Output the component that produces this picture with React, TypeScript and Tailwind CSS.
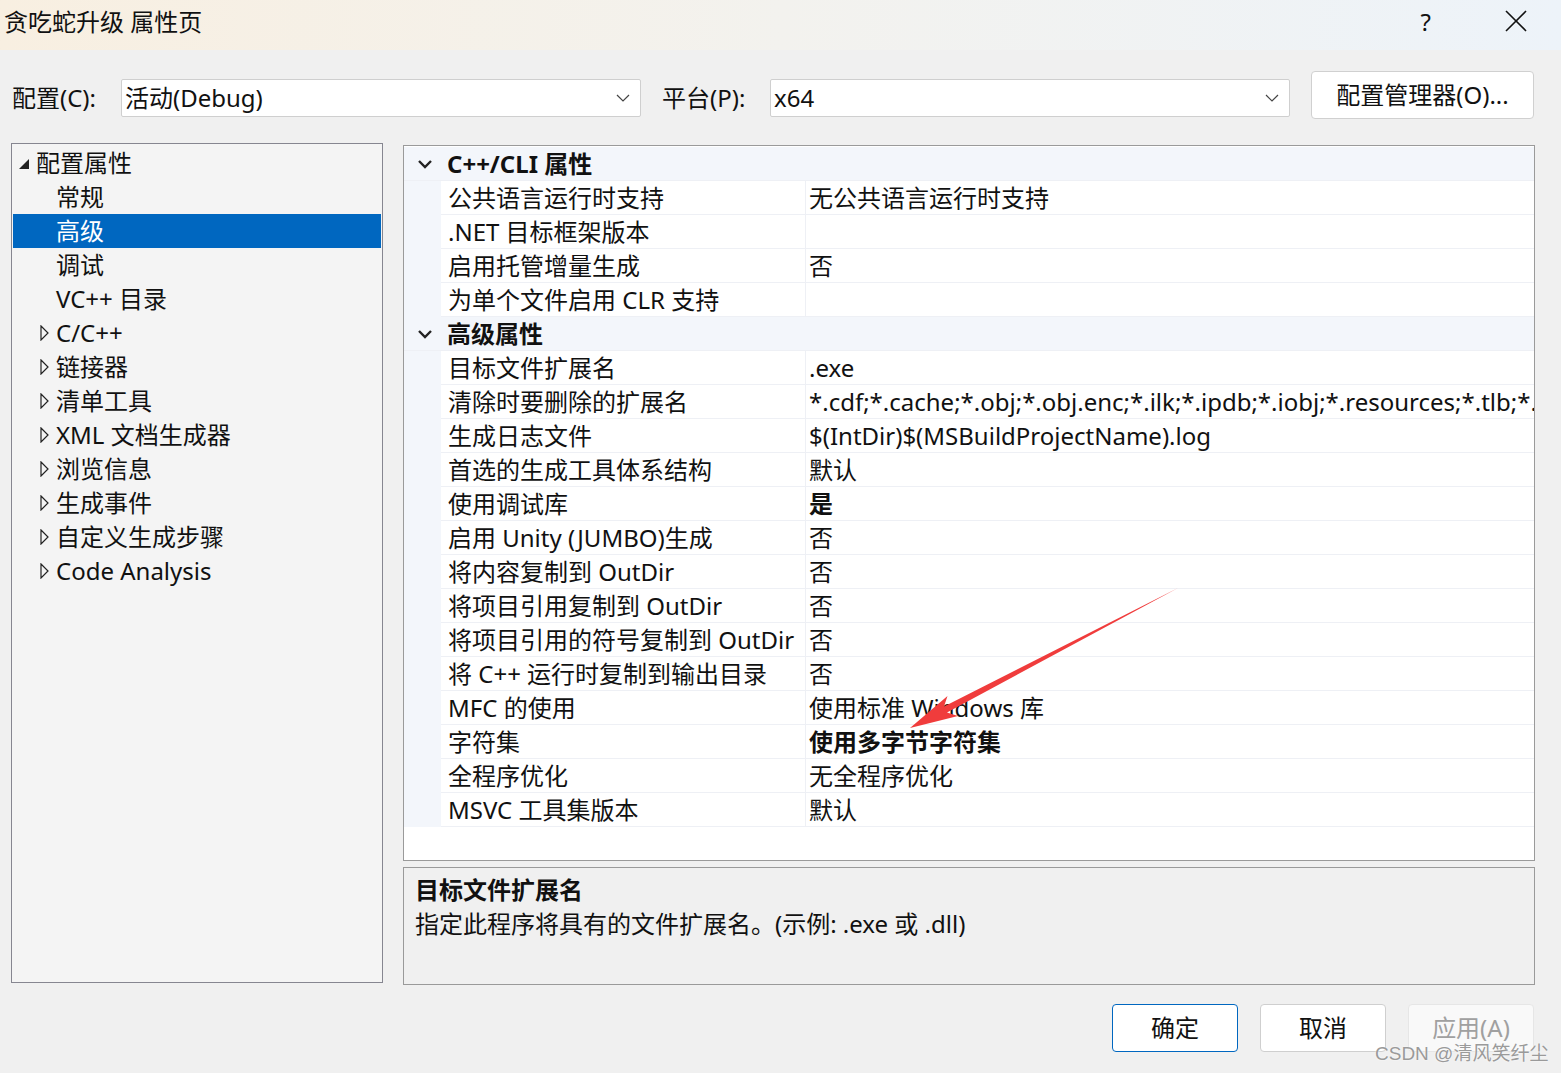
import React from "react";

const FONT = { fontFamily: '"Noto Sans", "Noto Sans CJK SC", sans-serif' };

type Row =
  | { kind: "cat"; label: string }
  | { kind: "prop"; name: string; value: string; bold?: boolean };

const rows: Row[] = [
  { kind: "cat", label: "C++/CLI 属性" },
  { kind: "prop", name: "公共语言运行时支持", value: "无公共语言运行时支持" },
  { kind: "prop", name: ".NET 目标框架版本", value: "" },
  { kind: "prop", name: "启用托管增量生成", value: "否" },
  { kind: "prop", name: "为单个文件启用 CLR 支持", value: "" },
  { kind: "cat", label: "高级属性" },
  { kind: "prop", name: "目标文件扩展名", value: ".exe" },
  {
    kind: "prop",
    name: "清除时要删除的扩展名",
    value:
      "*.cdf;*.cache;*.obj;*.obj.enc;*.ilk;*.ipdb;*.iobj;*.resources;*.tlb;*.tli;*.tlh;*.tmp;*.rsp;*.pgc;*.pgd;*.meta;*.tlog;*.manifest;*.res;*.pch;*.exp;*.idb",
  },
  { kind: "prop", name: "生成日志文件", value: "$(IntDir)$(MSBuildProjectName).log" },
  { kind: "prop", name: "首选的生成工具体系结构", value: "默认" },
  { kind: "prop", name: "使用调试库", value: "是", bold: true },
  { kind: "prop", name: "启用 Unity (JUMBO)生成", value: "否" },
  { kind: "prop", name: "将内容复制到 OutDir", value: "否" },
  { kind: "prop", name: "将项目引用复制到 OutDir", value: "否" },
  { kind: "prop", name: "将项目引用的符号复制到 OutDir", value: "否" },
  { kind: "prop", name: "将 C++ 运行时复制到输出目录", value: "否" },
  { kind: "prop", name: "MFC 的使用", value: "使用标准 Windows 库" },
  { kind: "prop", name: "字符集", value: "使用多字节字符集", bold: true },
  { kind: "prop", name: "全程序优化", value: "无全程序优化" },
  { kind: "prop", name: "MSVC 工具集版本", value: "默认" },
];

type TreeItem = { label: string; level: "root" | "leaf" | "collapsed"; selected?: boolean };
const tree: TreeItem[] = [
  { label: "配置属性", level: "root" },
  { label: "常规", level: "leaf" },
  { label: "高级", level: "leaf", selected: true },
  { label: "调试", level: "leaf" },
  { label: "VC++ 目录", level: "leaf" },
  { label: "C/C++", level: "collapsed" },
  { label: "链接器", level: "collapsed" },
  { label: "清单工具", level: "collapsed" },
  { label: "XML 文档生成器", level: "collapsed" },
  { label: "浏览信息", level: "collapsed" },
  { label: "生成事件", level: "collapsed" },
  { label: "自定义生成步骤", level: "collapsed" },
  { label: "Code Analysis", level: "collapsed" },
];

function Chevron() {
  return (
    <svg width="14" height="8" viewBox="0 0 14 8" className="shrink-0">
      <polyline points="1,1 7,7 13,1" fill="none" stroke="#444" strokeWidth="1.2" />
    </svg>
  );
}

function Select({ value }: { value: string }) {
  return (
    <div className="mt-[5px] flex h-[38px] w-[520px] items-center justify-between rounded-[2px] border border-[#cfcfcf] bg-white pl-[3px] pr-[10px]">
      <span className="text-[24px] leading-none text-[#111]">{value}</span>
      <Chevron />
    </div>
  );
}

export default function App() {
  return (
    <div
      style={FONT}
      className="relative h-[1073px] w-[1561px] overflow-hidden bg-[#f0f0f0] text-[#111]"
    >
      {/* Title bar */}
      <div className="flex h-[50px] items-center bg-gradient-to-r from-[#f8efe1] via-[#f3f2ee] to-[#edf3f9]">
        <div className="pl-[4px] pb-[6px] text-[24px] leading-none">贪吃蛇升级 属性页</div>
        <div className="flex-1" />
        <div className="pb-[6px] pr-[73px] text-[24px] leading-none">?</div>
        <svg width="24" height="24" viewBox="0 0 24 24" className="mb-[8px] mr-[33px]">
          <line x1="2" y1="2" x2="22" y2="22" stroke="#111" strokeWidth="1.6" />
          <line x1="22" y1="2" x2="2" y2="22" stroke="#111" strokeWidth="1.6" />
        </svg>
      </div>

      {/* Config row */}
      <div className="mt-[21px] flex h-[48px] items-center">
        <div className="w-[121px] pl-[12px] pt-[6px] text-[24px] leading-none">配置(C):</div>
        <Select value="活动(Debug)" />
        <div className="ml-[21px] w-[108px] pt-[6px] text-[24px] leading-none">平台(P):</div>
        <Select value="x64" />
        <div className="ml-[21px] flex h-[48px] w-[223px] items-center justify-center rounded-[4px] border border-[#d0d0d0] bg-white text-[24px] leading-none">
          配置管理器(O)...
        </div>
      </div>

      {/* Main area */}
      <div className="mt-[24px] flex">
        {/* Tree */}
        <div className="ml-[11px] h-[840px] w-[372px] border border-[#868690] bg-[#f4f4f4] pt-[2px]">
          {tree.map((t) => (
            <div
              key={t.label}
              className={
                "mx-[1px] flex h-[34px] items-center text-[24px] leading-none " +
                (t.selected ? "bg-[#0067c0] text-white" : "")
              }
            >
              {t.level === "root" && (
                <>
                  <svg width="12" height="12" viewBox="0 0 12 12" className="ml-[5px] mt-[2px]">
                    <polygon points="11,1 11,11 1,11" fill="#222" />
                  </svg>
                  <span className="ml-[6px]">{t.label}</span>
                </>
              )}
              {t.level === "leaf" && <span className="ml-[43px]">{t.label}</span>}
              {t.level === "collapsed" && (
                <>
                  <svg width="9" height="16" viewBox="0 0 9 16" className="ml-[27px]">
                    <polygon points="1,1 8,8 1,15" fill="none" stroke="#222" strokeWidth="1.2" />
                  </svg>
                  <span className="ml-[7px]">{t.label}</span>
                </>
              )}
            </div>
          ))}
        </div>

        {/* Right column */}
        <div className="ml-[20px] flex w-[1132px] flex-col pt-[2px]">
          <div className="h-[716px] overflow-hidden border border-[#9a9a9a] bg-white pt-[1px]">
            {rows.map((r, i) =>
              r.kind === "cat" ? (
                <div key={i} className="flex h-[34px] items-center bg-[#f3f6fb] border-b border-[#eef0f5]">
                  <svg width="16" height="10" viewBox="0 0 16 10" className="ml-[13px]">
                    <polyline points="2,2 8,8 14,2" fill="none" stroke="#222" strokeWidth="2.4" />
                  </svg>
                  <span className="ml-[14px] text-[24px] font-bold leading-none">{r.label}</span>
                </div>
              ) : (
                <div key={i} className="flex h-[34px]">
                  <div className="w-[37px] shrink-0 bg-[#f3f6fb]" />
                  <div className="flex w-[365px] shrink-0 items-center border-b border-r border-[#eef0f5] pl-[7px] text-[24px] leading-none whitespace-nowrap">
                    {r.name}
                  </div>
                  <div
                    className={
                      "flex min-w-0 flex-1 items-center overflow-hidden border-b border-[#eef0f5] pl-[3px] text-[24px] leading-none whitespace-nowrap " +
                      (r.bold ? "font-bold" : "")
                    }
                  >
                    {r.value}
                  </div>
                </div>
              )
            )}
          </div>
          <div className="mt-[6px] h-[118px] border border-[#9a9a9a] bg-[#f0f0f0] pl-[11px] pt-[5px]">
            <div className="text-[24px] font-bold leading-[34px]">目标文件扩展名</div>
            <div className="text-[24px] leading-[34px]">指定此程序将具有的文件扩展名。(示例: .exe 或 .dll)</div>
          </div>
        </div>
      </div>

      {/* Buttons */}
      <div className="mt-[19px] flex justify-end pr-[27px]">
        <div className="flex h-[48px] w-[126px] items-center justify-center rounded-[4px] border border-[#0067c0] bg-white text-[24px] leading-none">
          确定
        </div>
        <div className="ml-[22px] flex h-[48px] w-[126px] items-center justify-center rounded-[4px] border border-[#cfcfcf] bg-white text-[24px] leading-none">
          取消
        </div>
        <div className="ml-[22px] flex h-[48px] w-[126px] items-center justify-center rounded-[4px] border border-[#e6e6e6] bg-[#f9f9f9] text-[24px] leading-none text-[#a0a0a0]">
          应用(A)
        </div>
      </div>

      {/* Red arrow annotation */}
      <svg className="pointer-events-none absolute left-0 top-0" width="1561" height="1073">
        <polygon
          points="1178,588 947,712.5 958,716 910,728 947.5,696 944,706.5"
          fill="#f03c3c"
        />
      </svg>

      {/* Watermark */}
      <div
        className="absolute left-[1375px] top-[1044px] text-[19px] leading-none text-[#9a9a9a]"
        style={{ fontFamily: '"Liberation Sans", "Noto Sans CJK SC", sans-serif', textShadow: "0 0 2px #fff" }}
      >
        CSDN @清风笑纤尘
      </div>
    </div>
  );
}
